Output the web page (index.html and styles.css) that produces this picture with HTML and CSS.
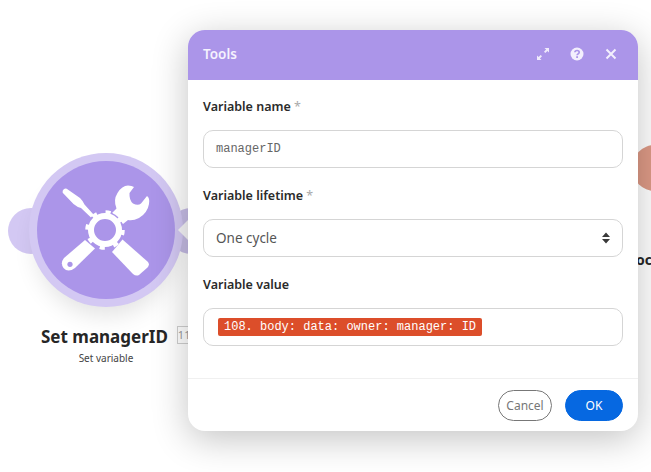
FILE: index.html
```html
<!DOCTYPE html>
<html>
    <head>
        <meta charset="utf-8" />
        <title>Tools</title>
        <link rel="stylesheet" href="styles.css">
    </head>

    <body>
        <!-- canvas: scenario nodes behind the dialog -->
        <div class="canvas">
            <div class="m-node">
                <span class="bump bump-l"></span>
                <span class="bump bump-r"></span>
                <div class="ring">
                    <div class="disc">
                        <svg class="tools" viewBox="51 175 110 110" width="110" height="110">
                            <!-- screwdriver -->
                            <path d="M66.700 188.700 L80 198 Q83 201 84.500 204.500 L93.500 214.500 L91 217.500 L81 208 Q77 207 73.500 204 L62.700 192.700 Q62 190.500 64 189 Q65.500 188 66.700 188.700 Z" fill="#fff" />
                            <!-- screwdriver handle -->
                            <path d="M64 258 L85 240 L95 248.500 L75 268 Q68 273 63.500 268 Q60 263 64 258 Z" fill="#fff" />
                            <circle cx="70" cy="264.300" r="2.600" fill="#ab95e9" />
                            <!-- wrench -->
                            <path d="M128 185.500 Q132 185.500 134 187 L129.500 193 Q129 200 133 203.500 Q138 206 141 203.500 L147 196 Q150 198 149 204 Q147.500 213 139 218 Q133 221 128 220 L123 224 L112 213 L116.500 208.500 Q113 200 117.500 193 Q122 185.500 128 185.500 Z" fill="#fff" />
                            <!-- wide handle -->
                            <path d="M122.500 239.500 L148 262 Q150 265 147.500 267.500 L139 275 Q136 276.500 133 274 L112 252 Z" fill="#fff" />
                            <!-- gear -->
                            <circle cx="105" cy="230" r="18.500" fill="#ab95e9" />
                            <circle cx="105" cy="230" r="14" fill="none" stroke="#fff" stroke-width="6" />
                            <circle cx="105" cy="230" r="18" fill="none" stroke="#fff" stroke-width="3.500" stroke-dasharray="5.200 8.940" />
                        </svg>
                    </div>
                </div>
                <span class="notch"></span>
                <div class="caption">
                    <h3>Set managerID<span class="badge">11</span></h3>
                    <p>Set variable</p>
                </div>
            </div>
            <div class="m-next">
                <span class="blob"></span>
                <span class="next-name">oc</span>
            </div>
        </div>

        <div class="m-dialog">
            <div class="hd">
                <span class="title">Tools</span>
                <div class="actions">
                    <svg viewBox="0 0 16 16" width="16" height="16">
                        <path d="M9.500 2 H14 V6.500 L12.400 4.900 L10.300 7 L9 5.700 L11.100 3.600 Z M6.500 14 H2 V9.500 L3.600 11.100 L5.700 9 L7 10.300 L4.900 12.400 Z" fill="#f0ebfc" />
                    </svg>
                    <svg viewBox="0 0 16 16" width="16" height="16">
                        <circle cx="8" cy="8" r="6.500" fill="#f3effd" />
                        <path d="M5.900 6.300 C6 3.900 10.200 3.900 10.200 6.300 C10.200 7.900 8.100 7.800 8.100 9.300" fill="none" stroke="#ab95e9" stroke-width="1.700" />
                        <rect x="7.200" y="10.200" width="1.800" height="1.800" fill="#ab95e9" />
                    </svg>
                    <svg viewBox="0 0 16 16" width="16" height="16">
                        <path d="M3.500 3.500 L12.500 12.500 M12.500 3.500 L3.500 12.500" stroke="#f3effd" stroke-width="2" fill="none" />
                    </svg>
                </div>
            </div>
            <div class="bd">
                <div class="field">
                    <label>Variable name <i>*</i></label>
                    <div class="box mono">managerID</div>
                </div>
                <div class="field">
                    <label>Variable lifetime <i>*</i></label>
                    <div class="box select">
                        <span>One cycle</span>
                        <svg viewBox="0 0 8 12" width="8" height="12">
                            <path d="M4 0.500 L8 5 H0 Z M4 11.500 L0 7 H8 Z" fill="#3a3a3a" />
                        </svg>
                    </div>
                </div>
                <div class="field">
                    <label>Variable value</label>
                    <div class="box value"><span class="pill">108. body: data: owner: manager: ID</span></div>
                </div>
            </div>
            <div class="ft">
                <button class="btn btn-cancel">Cancel</button>
                <button class="btn btn-ok">OK</button>
            </div>
        </div>
    </body>
</html>
```

FILE: styles.css
```css
* {
    margin: 0;
    padding: 0;
    box-sizing: border-box;
}
html, body {
    height: 100%;
    overflow: hidden;
}
body {
    background: #fff;
    font-family: "Noto Sans", "Open Sans", sans-serif;
    color: #2b2b2b;
}

/* canvas */
.canvas {
    position: absolute;
    left: 0;
    top: 0;
    width: 651px;
    height: 472px;
    overflow: hidden;
}
.m-node {
    position: absolute;
    left: 0;
    top: 140px;
    width: 220px;
    height: 240px;
}
.m-node .bump {
    position: absolute;
    top: 68px;
    width: 46px;
    height: 46px;
    border-radius: 50%;
    background: #d3c8f3;
}
.m-node .bump-l {
    left: 8px;
}
.m-node .bump-r {
    left: 168px;
    background: #c9bfe9;
}
.m-node .notch {
    position: absolute;
    left: 178px;
    top: 79px;
    width: 0;
    height: 0;
    border-top: 11px solid transparent;
    border-bottom: 11px solid transparent;
    border-right: 11px solid #f6f5f8;
}
.m-node .ring {
    position: absolute;
    left: 29px;
    top: 13px;
    width: 154px;
    height: 154px;
    border-radius: 50%;
    background: #d3c8f3;
    display: flex;
    align-items: center;
    justify-content: center;
    box-shadow: 0 16px 24px -8px rgba(0, 0, 0, 0.12);
}
.m-node .disc {
    width: 138px;
    height: 138px;
    border-radius: 50%;
    background: #ab95e9;
    display: flex;
    align-items: center;
    justify-content: center;
}
.m-node .tools {
    display: block;
}
.m-node .caption {
    position: absolute;
    left: 0;
    top: 186px;
    width: 212px;
}
.m-node h3 {
    padding-left: 41px;
    font-size: 17px;
    line-height: 22px;
    font-weight: 700;
    color: #262626;
    white-space: nowrap;
}
.m-node .badge {
    display: inline-block;
    width: 14px;
    height: 18px;
    margin-left: 9px;
    overflow: hidden;
    border: 1px solid #cfcfcf;
    font-size: 11px;
    line-height: 16px;
    font-weight: 400;
    color: #999;
    vertical-align: -1px;
}
.m-node p {
    font-size: 10px;
    line-height: 14px;
    margin-top: 3px;
    text-align: center;
    color: #444;
}
.m-next .blob {
    position: absolute;
    left: 632px;
    top: 145px;
    width: 46px;
    height: 46px;
    border-radius: 50%;
    background: #dd9a86;
}
.m-next .next-name {
    position: absolute;
    left: 636px;
    top: 250px;
    font-size: 14px;
    line-height: 20px;
    font-weight: 700;
    color: #262626;
}

/* dialog */
.m-dialog {
    position: absolute;
    left: 188px;
    top: 30px;
    width: 450px;
    height: 401px;
    display: flex;
    flex-direction: column;
    background: #fff;
    border-radius: 17px;
    overflow: hidden;
    box-shadow: 0 8px 36px rgba(0, 0, 0, 0.24);
}
.m-dialog .hd {
    height: 50px;
    flex: none;
    display: flex;
    align-items: center;
    justify-content: space-between;
    padding: 0 19px 2px 15px;
    background: #ab95e9;
}
.m-dialog .title {
    font-size: 13.500px;
    font-weight: 600;
    color: #f5f2fe;
}
.m-dialog .actions {
    display: flex;
    align-items: center;
    gap: 18px;
}
.m-dialog .actions svg {
    display: block;
}
.m-dialog .bd {
    flex: 1;
    padding: 18px 15px 0;
}
.m-dialog .field {
    margin-bottom: 19px;
}
.m-dialog label {
    display: block;
    font-size: 12.500px;
    line-height: 18px;
    font-weight: 600;
    color: #2b2b2b;
    margin-bottom: 14px;
}
.m-dialog label i {
    font-style: normal;
    font-weight: 400;
    color: #aaa;
}
.m-dialog .box {
    height: 38px;
    border: 1px solid #d5d5d5;
    border-radius: 10px;
    padding: 0 12px;
    display: flex;
    align-items: center;
}
.m-dialog .mono {
    font-family: "Liberation Mono", monospace;
    font-size: 12px;
    color: #666;
}
.m-dialog .select {
    justify-content: space-between;
    font-size: 13.500px;
    color: #555;
}
.m-dialog .value {
    padding-left: 14px;
}
.m-dialog .pill {
    background: #dc4e2a;
    color: #fff;
    border-radius: 2px;
    padding: 0 6px;
    font-family: "Liberation Mono", monospace;
    font-size: 12px;
    line-height: 18px;
    white-space: nowrap;
}
.m-dialog .ft {
    height: 53px;
    flex: none;
    display: flex;
    align-items: center;
    justify-content: flex-end;
    gap: 13px;
    padding: 0 15px;
    border-top: 1px solid #f0f0f0;
}
.btn {
    height: 31px;
    border-radius: 16px;
    font-family: inherit;
    font-size: 12px;
    background: none;
    border: 1px solid #777;
    color: #777;
}
.btn-cancel {
    width: 54px;
}
.btn-ok {
    width: 58px;
    background: #0668e1;
    border-color: #0668e1;
    color: #fff;
}
```
